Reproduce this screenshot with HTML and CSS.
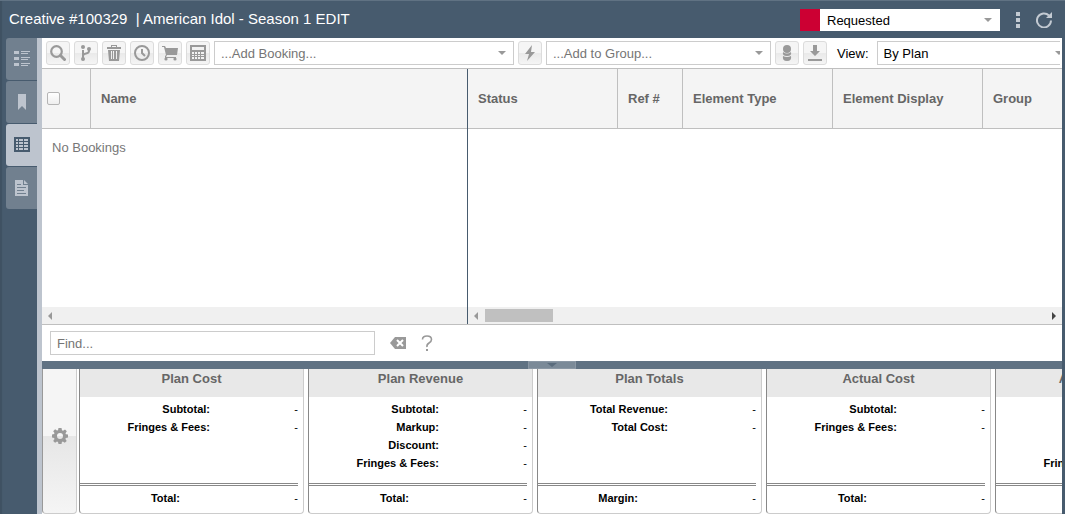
FILE: index.html
```html
<!DOCTYPE html>
<html lang="en">
<head>
    <meta charset="UTF-8">
    <meta name="viewport" content="width=device-width, initial-scale=1.0">
    <title>Creative #100329</title>
    <link rel="stylesheet" href="styles.css">
</head>
<body>
    <header class="header">
        <h1>Creative #100329 &nbsp;| American Idol - Season 1 EDIT</h1>
        <div class="header-actions">
            <div class="status">
                <span class="status-color"></span>
                <span class="select-wrap">
                    <select aria-label="Status"><option>Requested</option></select>
                </span>
            </div>
            <button class="header-btn" aria-label="More">
                <svg width="4" height="16" viewBox="0 0 4 16"><path d="M0 0h4v4H0zM0 6h4v4H0zM0 12h4v4H0z" fill="#c3cad2"/></svg>
            </button>
            <button class="header-btn" aria-label="Refresh">
                <svg width="16" height="16" viewBox="0 0 16 16"><path d="M13 3.500A7 7 0 1 0 15 8.500" fill="none" stroke="#c3cad2" stroke-width="2"/><path d="M16 0v6h-6z" fill="#c3cad2"/></svg>
            </button>
        </div>
    </header>

    <div class="main">
        <nav class="tabs">
            <button class="tab" aria-label="Details">
                <svg width="16" height="16" viewBox="0 0 16 16" fill="currentColor"><path d="M0 0h5v3H0zM0 6h5v3H0zM0 12h5v3H0zM7 0h9v1H7zM7 2h7v1H7zM7 6h9v1H7zM7 8h7v1H7zM7 12h9v1H7zM7 14h7v1H7z"/></svg>
            </button>
            <button class="tab" aria-label="Bookmarks">
                <svg width="16" height="16" viewBox="0 0 16 16" fill="currentColor"><path d="M4 0h8v16l-4-4-4 4z"/></svg>
            </button>
            <button class="tab active" aria-label="Bookings">
                <svg width="16" height="16" viewBox="0 0 16 16"><path d="M0 0h16v15H0z" fill="currentColor"/><path d="M2 2h2v2H2zM5 2h4v2H5zM10 2h4v2h-4zM2 5h2v2H2zM5 5h4v2H5zM10 5h4v2h-4zM2 8h2v2H2zM5 8h4v2H5zM10 8h4v2h-4zM2 11h2v2H2zM5 11h4v2H5zM10 11h4v2h-4z" fill="#bdc4ce"/></svg>
            </button>
            <button class="tab" aria-label="Documents">
                <svg width="16" height="16" viewBox="0 0 16 16"><path d="M1 0h8v5h5v11H1zM10 0l4 4h-4z" fill="currentColor"/><path d="M3 4h4v1H3zM3 7h9v1H3zM3 10h7v1H3zM3 13h9v1H3z" fill="#71808f"/></svg>
            </button>
        </nav>

        <div class="content">
            <div class="toolbar">
                <button class="btn" aria-label="Search">
                    <svg width="16" height="16" viewBox="0 0 16 16" fill="none" stroke="currentColor"><circle cx="6.500" cy="6.500" r="5.300" stroke-width="2.200"/><path d="M10.500 10.500l4 4" stroke-width="3" stroke-linecap="round"/></svg>
                </button>
                <button class="btn" aria-label="Branch">
                    <svg width="16" height="16" viewBox="0 0 16 16" fill="currentColor"><circle cx="5" cy="2" r="2"/><circle cx="11" cy="4" r="2"/><circle cx="5" cy="14" r="2"/><path d="M5 5v8M11 5v1q0 2-3 2.500T5 11" fill="none" stroke="currentColor" stroke-width="2"/></svg>
                </button>
                <button class="btn" aria-label="Delete">
                    <svg width="16" height="16" viewBox="0 0 16 16" fill="currentColor"><path d="M5 0h6v2h4v2H1V2h4zM6 1v1h4V1z" fill-rule="evenodd"/><path d="M2 5h12l-1 11H3zM5 6v8h1V6zM7 6v8h1V6zM10 6v8h1V6z" fill-rule="evenodd"/></svg>
                </button>
                <button class="btn" aria-label="History">
                    <svg width="16" height="16" viewBox="0 0 16 16" fill="none" stroke="currentColor" stroke-width="2"><circle cx="8" cy="8" r="7"/><path d="M8 4v4l3 3"/></svg>
                </button>
                <button class="btn" aria-label="Cart">
                    <svg width="16" height="16" viewBox="0 0 16 16" fill="currentColor"><path d="M0 1h3l1 2h12l-1 7H5l-1 2h10v1H3v-2l1-1-2-8H0z"/><circle cx="4" cy="14" r="1.600"/><circle cx="13" cy="14" r="1.600"/></svg>
                </button>
                <button class="btn" aria-label="Calculator">
                    <svg width="16" height="16" viewBox="0 0 16 16"><path d="M0 0h16v16H0z" fill="currentColor"/><path d="M2 2h12v3H2zM2 7h2v2H2zM5 7h2v2H5zM8 7h2v2H8zM11 7h3v2h-3zM2 10h2v1H2zM5 10h2v1H5zM8 10h2v1H8zM11 10h3v1h-3zM2 12h2v2H2zM5 12h2v2H5zM8 12h2v2H8zM11 12h3v2h-3z" fill="#f2f2f2"/></svg>
                </button>
                <span class="select-wrap booking-select">
                    <select class="placeholder" aria-label="Add booking"><option>...Add Booking...</option></select>
                </span>
                <button class="btn" aria-label="Quick add">
                    <svg width="16" height="16" viewBox="0 0 16 16" fill="currentColor"><path d="M10 0L3 9h4l-2 7 8-9H9z"/></svg>
                </button>
                <span class="select-wrap group-select">
                    <select class="placeholder" aria-label="Add to group"><option>...Add to Group...</option></select>
                </span>
                <button class="btn" aria-label="Costs">
                    <svg width="16" height="16" viewBox="0 0 16 16" fill="currentColor"><circle cx="8" cy="4" r="4"/><path d="M4 7q4 3 8 0 1 4-4 4T4 7zM4 11q4 2 8 0 1 5-4 5t-4-5z"/></svg>
                </button>
                <button class="btn" aria-label="Download">
                    <svg width="16" height="16" viewBox="0 0 16 16" fill="currentColor"><path d="M6 0h4v6h3l-5 5-5-5h3zM1 14h14v2H1z"/></svg>
                </button>
                <div class="view">
                    <label for="view">View:</label>
                    <span class="select-wrap view-select">
                        <select id="view"><option>By Plan</option></select>
                    </span>
                </div>
            </div>

            <div class="grid">
                <div class="pane pane-locked">
                    <table>
                        <thead>
                            <tr>
                                <th class="col-check"><input type="checkbox" aria-label="Select all"></th>
                                <th>Name</th>
                            </tr>
                        </thead>
                        <tbody>
                            <tr><td colspan="2">No Bookings</td></tr>
                        </tbody>
                    </table>
                    <div class="scrollbar"><span class="arrow-left"></span></div>
                </div>
                <div class="pane pane-scroll">
                    <table>
                        <thead>
                            <tr>
                                <th class="col-md">Status</th>
                                <th class="col-sm">Ref #</th>
                                <th class="col-md">Element Type</th>
                                <th class="col-md">Element Display</th>
                                <th>Group</th>
                            </tr>
                        </thead>
                    </table>
                    <div class="scrollbar">
                        <span class="arrow-left"></span>
                        <span class="thumb"></span>
                        <span class="arrow-right"></span>
                    </div>
                </div>
            </div>

            <div class="find">
                <input type="text" placeholder="Find..." aria-label="Find">
                <button class="icon-btn" aria-label="Clear">
                    <svg width="16" height="12" viewBox="0 0 16 12"><path d="M5 0h11v12H5L0 6z" fill="#999"/><path d="M7 3l6 6M13 3l-6 6" stroke="#fff" stroke-width="2"/></svg>
                </button>
                <button class="icon-btn" aria-label="Help">
                    <svg width="12" height="16" viewBox="0 0 12 16"><path d="M1.500 4.500Q1.500 1 6 1t4.500 3.500Q10.500 6.500 8 8T6 12" fill="none" stroke="#999" stroke-width="1.600"/><path d="M5 14h2v2H5z" fill="#999"/></svg>
                </button>
            </div>

            <div class="splitter"><button class="collapse" aria-label="Collapse"></button></div>

            <div class="summary">
                <button class="settings" aria-label="Settings">
                    <svg width="16" height="16" viewBox="0 0 16 16"><path fill-rule="evenodd" fill="#999" d="M6.500 0h3l.5 2.200 1 .5L13 1.500 14.800 3.300 13.500 5.200l.4 1.100L16 6.500v3l-2.200.5-.4 1 1.300 1.900-1.900 1.900-1.900-1.300-1 .4L9.500 16h-3L6 13.900l-1-.4-1.900 1.300-1.900-1.900L2.500 11l-.4-1L0 9.500v-3L2.100 6l.4-1L1.200 3.200l1.900-1.900L5 2.600l1-.4zM8 5a3 3 0 1 0 0 6 3 3 0 0 0 0-6z"/></svg>
                </button>
                <section class="card">
                    <h2>Plan Cost</h2>
                    <dl class="rows">
                        <dt>Subtotal:</dt><dd>-</dd>
                        <dt>Fringes &amp; Fees:</dt><dd>-</dd>
                    </dl>
                    <dl class="total"><dt>Total:</dt><dd>-</dd></dl>
                </section>
                <section class="card">
                    <h2>Plan Revenue</h2>
                    <dl class="rows">
                        <dt>Subtotal:</dt><dd>-</dd>
                        <dt>Markup:</dt><dd>-</dd>
                        <dt>Discount:</dt><dd>-</dd>
                        <dt>Fringes &amp; Fees:</dt><dd>-</dd>
                    </dl>
                    <dl class="total"><dt>Total:</dt><dd>-</dd></dl>
                </section>
                <section class="card">
                    <h2>Plan Totals</h2>
                    <dl class="rows">
                        <dt>Total Revenue:</dt><dd>-</dd>
                        <dt>Total Cost:</dt><dd>-</dd>
                    </dl>
                    <dl class="total"><dt>Margin:</dt><dd>-</dd></dl>
                </section>
                <section class="card">
                    <h2>Actual Cost</h2>
                    <dl class="rows">
                        <dt>Subtotal:</dt><dd>-</dd>
                        <dt>Fringes &amp; Fees:</dt><dd>-</dd>
                    </dl>
                    <dl class="total"><dt>Total:</dt><dd>-</dd></dl>
                </section>
                <section class="card">
                    <h2>Actual Revenue</h2>
                    <dl class="rows">
                        <dt></dt><dd></dd>
                        <dt></dt><dd></dd>
                        <dt></dt><dd></dd>
                        <dt>Fringes &amp; Fees:</dt><dd></dd>
                    </dl>
                    <dl class="total"><dt></dt><dd></dd></dl>
                </section>
            </div>
        </div>
    </div>
</body>
</html>
```

FILE: styles.css
```css
* {
    margin: 0;
    padding: 0;
    box-sizing: border-box;
    font-family: "Liberation Sans", Arial, sans-serif;
}

body {
    height: 100vh;
    display: flex;
    flex-direction: column;
    background: #475b6e;
    box-shadow: inset 2px 0 1px #3f5162;
    font-size: 13px;
    overflow: hidden;
}

button {
    border: none;
    background: none;
    cursor: pointer;
}

svg {
    display: block;
}

/* header */
.header {
    flex: none;
    height: 38px;
    display: flex;
    align-items: center;
    justify-content: space-between;
    padding: 1px 13px 0 9px;
    border-top: 1px solid #607283;
}

.header h1 {
    font-size: 15px;
    font-weight: normal;
    line-height: 20px;
    padding-bottom: 2px;
    color: #fff;
}

.header-actions {
    display: flex;
    align-items: center;
    gap: 16px;
}

.status {
    display: flex;
    height: 22px;
}

.status-color {
    width: 20px;
    background: #cc0033;
}

.status .select-wrap {
    width: 180px;
}

.status select {
    border-color: #fff;
}

/* drop-downs */
.select-wrap {
    position: relative;
    display: block;
}

.select-wrap::after {
    content: "";
    position: absolute;
    top: 50%;
    right: 8px;
    margin-top: -2px;
    border: 4px solid transparent;
    border-top-color: #999;
    border-bottom: 0;
    pointer-events: none;
}

select {
    appearance: none;
    display: block;
    width: 100%;
    height: 100%;
    padding: 0 20px 0 6px;
    border: 1px solid #ccc;
    border-radius: 0;
    background: #fff;
    color: #000;
    font-size: 13px;
}

select.placeholder {
    color: #757575;
}

.main {
    flex: 1;
    min-height: 0;
    display: flex;
    padding-right: 3px;
}

/* side tabs */
.tabs {
    flex: none;
    width: 42px;
    display: flex;
    flex-direction: column;
    gap: 1px;
    padding-left: 6px;
    border-right: 5px solid #bdc4ce;
}

.tab {
    height: 42px;
    display: flex;
    align-items: center;
    justify-content: center;
    border-radius: 3px 0 0 3px;
    background: #71808f;
    color: #bdc4ce;
}

.tab.active {
    background: #bdc4ce;
    color: #475b6e;
}

.content {
    flex: 1;
    min-width: 0;
    display: flex;
    flex-direction: column;
    background: #fff;
}

/* toolbar */
.toolbar {
    flex: none;
    height: 31px;
    display: flex;
    align-items: center;
    gap: 4px;
    padding: 0 2px 0 4px;
    border-bottom: 1px solid #bfbfbf;
}

.btn {
    flex: none;
    width: 24px;
    height: 24px;
    display: flex;
    align-items: center;
    justify-content: center;
    border: 1px solid #dcdcdc;
    border-radius: 3px;
    background: linear-gradient(#f5f5f5 50%, #e9e9e9 50%, #f5f5f5);
    color: #999;
}

.toolbar .select-wrap {
    height: 24px;
}

.booking-select {
    flex: 0 1 300px;
}

.group-select {
    flex: 0 1 225px;
}

.view {
    flex: 1;
    min-width: 0;
    display: flex;
    align-items: center;
    gap: 8px;
    padding-left: 6px;
    overflow: hidden;
}

.view-select {
    flex: none;
    width: 194px;
}

/* bookings grid */
.grid {
    flex: 1;
    min-height: 0;
    display: flex;
    border-bottom: 1px solid #bfbfbf;
}

.pane {
    display: flex;
    flex-direction: column;
    justify-content: space-between;
    min-width: 0;
    overflow: hidden;
}

.pane-locked {
    flex: 0 1 426px;
    border-right: 1px solid #475b6e;
}

.pane-scroll {
    flex: 1;
}

table {
    width: 100%;
    table-layout: fixed;
    border-collapse: separate;
    border-spacing: 0;
}

th {
    height: 60px;
    padding: 0 10px;
    border-right: 1px solid #bfbfbf;
    border-bottom: 1px solid #bfbfbf;
    background: #f4f4f4;
    color: #666;
    text-align: left;
    white-space: nowrap;
}

th:last-child {
    border-right: none;
}

td {
    height: 37px;
    padding: 0 10px;
    color: #777;
}

.col-check {
    width: 49px;
    padding: 0 5px;
}

.col-check input {
    appearance: none;
    display: block;
    width: 13px;
    height: 13px;
    border: 1px solid #b5b5b5;
    border-radius: 2px;
    background: linear-gradient(#fff, #eee);
}

.col-sm {
    width: 65px;
}

.col-md {
    width: 150px;
}

.scrollbar {
    flex: none;
    height: 17px;
    display: flex;
    align-items: center;
    gap: 7px;
    padding: 0 6px;
    background: #f0f0f0;
}

.arrow-left {
    border: 4px solid transparent;
    border-right-color: #999;
    border-left: 0;
}

.arrow-right {
    margin-left: auto;
    border: 4px solid transparent;
    border-left-color: #444;
    border-right: 0;
}

.thumb {
    width: 68px;
    height: 13px;
    background: #c0c0c0;
}

/* find bar */
.find {
    flex: none;
    height: 36px;
    display: flex;
    align-items: center;
    gap: 15px;
    padding: 0 8px;
}

.find input {
    width: 325px;
    height: 24px;
    padding: 0 6px;
    border: 1px solid #ccc;
    font-size: 13px;
}

.find input::placeholder {
    color: #757575;
}

.splitter {
    flex: none;
    height: 8px;
    display: flex;
    justify-content: center;
    background: #607283;
}

.collapse {
    width: 48px;
    display: flex;
    align-items: center;
    justify-content: center;
    border: 1px solid #8a97a4;
    background: #7b8a98;
}

.collapse::after {
    content: "";
    border: 5px solid transparent;
    border-top: 4px solid #5a6c7d;
    border-bottom: 0;
}

/* summary cards */
.summary {
    flex: none;
    display: flex;
    gap: 4px;
    overflow: hidden;
}

.settings {
    flex: none;
    width: 35px;
    display: flex;
    align-items: center;
    justify-content: center;
    margin-right: -2px;
    padding-bottom: 10px;
    border: 1px solid #ccc;
    border-top: none;
    border-left-color: #999;
    border-radius: 0 0 4px 4px;
    background: linear-gradient(#f5f5f5 67px, #e6e6e6 67px, #f5f5f5);
}

.card {
    flex: none;
    width: 225px;
    border: 1px solid #ccc;
    border-top: none;
    border-left-color: #888;
    border-radius: 0 0 4px 4px;
    font-size: 11px;
    font-weight: bold;
    line-height: 18px;
}

.card h2 {
    height: 28px;
    background: #e8e8e8;
    color: #666;
    font-size: 13px;
    line-height: 20px;
    text-align: center;
}

.card dl {
    display: grid;
    grid-template-columns: 130px 1fr;
    margin-right: 5px;
    text-align: right;
}

.card dt,
.card dd {
    min-height: 18px;
}

.card dd {
    font-weight: normal;
}

.card .rows {
    height: 86px;
    align-content: start;
    padding-top: 3px;
}

.card .total {
    grid-template-columns: 100px 1fr;
    padding: 3px 0 6px;
    border-top: 3px double #888;
}
```
